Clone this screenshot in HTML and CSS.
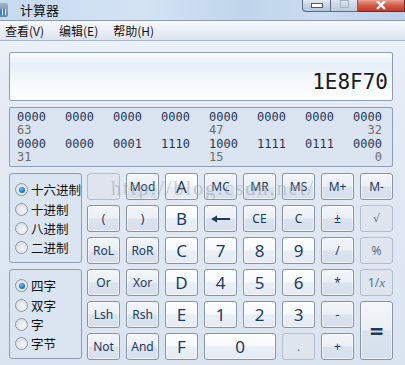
FILE: index.html
```html
<!DOCTYPE html>
<html lang="zh-CN">
<head>
    <meta charset="UTF-8">
    <meta name="viewport" content="width=device-width, initial-scale=1.0">
    <title>计算器</title>
    <link rel="stylesheet" href="styles.css">
</head>
<body>
    <div class="window">
        <!-- Title bar -->
        <div class="titlebar">
            <span class="app-icon"><span></span></span>
            <span class="title">计算器</span>
            <div class="win-buttons">
                <span class="wb wb-min"><i></i></span>
                <span class="wb wb-max"><i></i></span>
                <span class="wb wb-close">
                    <svg width="12" height="9" viewBox="0 0 12 9"><path d="M2 0 L10 8 M10 0 L2 8" stroke="#fff" stroke-width="2.4"/></svg>
                </span>
            </div>
        </div>

        <!-- Menu -->
        <div class="menubar">
            <span class="menu-item">查看(V)</span>
            <span class="menu-item">编辑(E)</span>
            <span class="menu-item">帮助(H)</span>
        </div>

        <div class="content">
            <div class="display">1E8F70</div>

            <div class="bits">
                <span>0000</span><span>0000</span><span>0000</span><span>0000</span>
                <span>0000</span><span>0000</span><span>0000</span><span>0000</span>
                <span class="pos c1">63</span><span class="pos c5">47</span><span class="pos c8">32</span>
                <span>0000</span><span>0000</span><span>0001</span><span>1110</span>
                <span>1000</span><span>1111</span><span>0111</span><span>0000</span>
                <span class="pos c1">31</span><span class="pos c5">15</span><span class="pos c8">0</span>
            </div>

            <div class="keypad">
                <div class="modes">
                    <div class="group">
                        <div class="radio-row"><span class="radio checked"></span>十六进制</div>
                        <div class="radio-row"><span class="radio"></span>十进制</div>
                        <div class="radio-row"><span class="radio"></span>八进制</div>
                        <div class="radio-row"><span class="radio"></span>二进制</div>
                    </div>
                    <div class="group">
                        <div class="radio-row"><span class="radio checked"></span>四字</div>
                        <div class="radio-row"><span class="radio"></span>双字</div>
                        <div class="radio-row"><span class="radio"></span>字</div>
                        <div class="radio-row"><span class="radio"></span>字节</div>
                    </div>
                </div>

                <div class="keys">
                    <!-- row 1 -->
                    <span class="key disabled"></span>
                    <span class="key">Mod</span>
                    <span class="key big light">A</span>
                    <span class="key">MC</span>
                    <span class="key">MR</span>
                    <span class="key">MS</span>
                    <span class="key">M+</span>
                    <span class="key">M-</span>
                    <!-- row 2 -->
                    <span class="key">(</span>
                    <span class="key">)</span>
                    <span class="key big light">B</span>
                    <span class="key">
                        <svg width="19" height="8" viewBox="0 0 19 8"><path d="M19 4 H3" stroke="#1e3a5f" stroke-width="2"/><path d="M0 4 L6 0.5 V7.5 Z" fill="#1e3a5f"/></svg>
                    </span>
                    <span class="key">CE</span>
                    <span class="key">C</span>
                    <span class="key">±</span>
                    <span class="key disabled sym">√</span>
                    <!-- row 3 -->
                    <span class="key">RoL</span>
                    <span class="key">RoR</span>
                    <span class="key big light">C</span>
                    <span class="key big light">7</span>
                    <span class="key big light">8</span>
                    <span class="key big light">9</span>
                    <span class="key">/</span>
                    <span class="key disabled">%</span>
                    <!-- row 4 -->
                    <span class="key">Or</span>
                    <span class="key">Xor</span>
                    <span class="key big light">D</span>
                    <span class="key big light">4</span>
                    <span class="key big light">5</span>
                    <span class="key big light">6</span>
                    <span class="key">*</span>
                    <span class="key disabled">1/<em>x</em></span>
                    <!-- row 5 -->
                    <span class="key">Lsh</span>
                    <span class="key">Rsh</span>
                    <span class="key big light">E</span>
                    <span class="key big light">1</span>
                    <span class="key big light">2</span>
                    <span class="key big light">3</span>
                    <span class="key">-</span>
                    <span class="key equals">=</span>
                    <!-- row 6 -->
                    <span class="key">Not</span>
                    <span class="key">And</span>
                    <span class="key big light">F</span>
                    <span class="key big light zero">0</span>
                    <span class="key disabled">.</span>
                    <span class="key">+</span>
                </div>

                <div class="watermark">http://blog.csdn.net/</div>
            </div>
        </div>
    </div>
</body>
</html>
```

FILE: styles.css
```css
body {
    margin: 0;
    font-family: "Noto Sans", "Noto Sans CJK SC", sans-serif;
    background: #dde7f2;
    overflow: hidden;
}
.window {
    width: 405px;
    height: 365px;
    background: linear-gradient(#eef3fa, #e4ebf5 30%, #dae4f0);
}

/* title bar */
.titlebar {
    height: 20px;
    display: flex;
    align-items: flex-start;
    background: linear-gradient(90deg, #c6daf0, #d3e3f4 35%, #c0d5ec 60%, #cadcf0 80%, #bcd1ea);
    border-bottom: 1px solid #8b9bb0;
}
.app-icon {
    width: 8px;
    height: 14px;
    margin-top: 3px;
    background: linear-gradient(#9fb3c9, #6f87a3);
    border-radius: 0 2px 2px 0;
    display: flex;
    align-items: flex-end;
}
.app-icon span {
    width: 6px;
    height: 6px;
    margin-bottom: 2px;
    background: repeating-linear-gradient(90deg, #3a83d4 0 2px, #e8f1fb 2px 3px);
}
.title {
    margin-left: 12px;
    margin-top: 1px;
    font-family: "Noto Sans CJK SC", sans-serif;
    font-size: 13px;
    line-height: 18px;
    color: #111;
}
.win-buttons {
    margin-left: auto;
    display: flex;
}
.wb {
    height: 11px;
    border: 1px solid #5d6c80;
    border-top: none;
    display: flex;
    align-items: center;
    justify-content: center;
}
.wb-min {
    width: 27px;
    border-radius: 0 0 0 4px;
    background: linear-gradient(#e4ecf6, #c4d3e5 50%, #b3c6dc);
}
.wb-min i {
    width: 10px;
    height: 3px;
    background: #fff;
    border: 1px solid #4b5a6e;
}
.wb-max {
    width: 26px;
    border-left: none;
    background: linear-gradient(#dfe7f1, #cad6e5 50%, #bccbdd);
}
.wb-max i {
    width: 7px;
    height: 6px;
    border: 1px solid #a6b3c3;
    margin-top: -3px;
}
.wb-close {
    width: 46px;
    border-left: none;
    border-color: #7a2a22;
    background: linear-gradient(#e8a090, #d25a46 50%, #c0392b);
}

/* menu */
.menubar {
    height: 19px;
    display: flex;
    align-items: center;
    padding-left: 5px;
    gap: 15px;
    background: linear-gradient(#f6f8fc, #eaeff7 50%, #dde4ef);
    border-bottom: 1px solid #a9b6c8;
}
.menu-item {
    font-family: "Noto Sans CJK SC", sans-serif;
    font-size: 12px;
    color: #111;
    line-height: 19px;
}

.content {
    padding: 11px 12px 0 9px;
}

/* display */
.display {
    box-sizing: border-box;
    height: 49px;
    border: 1px solid #8e9db4;
    border-radius: 2px;
    background: linear-gradient(#fafcfe, #e6eef8 25%, #f4f8fc 55%, #fff);
    display: flex;
    align-items: flex-end;
    justify-content: flex-end;
    padding: 0 4px 6px 0;
    font-family: "DejaVu Sans Mono", monospace;
    font-size: 21px;
    line-height: 24px;
    color: #1a1a1a;
}

/* binary view */
.bits {
    margin-top: 6px;
    height: 60px;
    box-sizing: border-box;
    border: 1px solid #8e9db4;
    border-radius: 2px;
    background: #dbe5f1;
    padding: 3px 0 0 7px;
    display: grid;
    grid-template-columns: repeat(8, 29px);
    column-gap: 19px;
    grid-auto-rows: 13.3px;
    font-family: "DejaVu Sans Mono", monospace;
    font-size: 12px;
    line-height: 13px;
    color: #253655;
}
.bits .pos {
    color: #6c6c6c;
}
.bits .c1 { grid-column: 1; }
.bits .c5 { grid-column: 5; }
.bits .c8 { grid-column: 8; text-align: right; }

/* keypad */
.keypad {
    position: relative;
    margin-top: 6px;
    display: flex;
    gap: 5px;
}
.modes {
    width: 73px;
    display: flex;
    flex-direction: column;
    gap: 6px;
}
.group {
    height: 90px;
    box-sizing: border-box;
    border: 1px solid #8e9db4;
    border-radius: 3px;
    background: #dbe5f1;
    padding: 6px 0 0 5px;
}
.radio-row {
    height: 19.4px;
    display: flex;
    align-items: center;
    gap: 3px;
    white-space: nowrap;
    font-family: "Noto Sans CJK SC", sans-serif;
    font-size: 12.5px;
    color: #111;
}
.radio {
    flex: none;
    width: 11px;
    height: 11px;
    border: 1px solid #8d97a6;
    border-radius: 50%;
    background: radial-gradient(circle at 60% 65%, #f4f6f9, #d3d9e1);
    display: flex;
    align-items: center;
    justify-content: center;
}
.radio.checked::after {
    content: "";
    width: 6px;
    height: 6px;
    border-radius: 50%;
    background: radial-gradient(circle at 40% 35%, #6fc2f4, #1c6fc0 60%, #0d4a8c);
}

.keys {
    display: grid;
    grid-template-columns: repeat(8, 33px);
    grid-auto-rows: 27px;
    gap: 5px 6px;
}
.key {
    box-sizing: border-box;
    border: 1px solid #8794a7;
    border-radius: 3px;
    background: linear-gradient(#f3f6fa, #eaf0f7 48%, #dae3ee 52%, #d6e0ec);
    box-shadow: inset 0 0 0 1px rgba(255, 255, 255, 0.6);
    display: flex;
    align-items: center;
    justify-content: center;
    font-size: 12px;
    color: #1e3a5f;
}
.key.big {
    font-size: 17px;
}
.key.light {
    background: linear-gradient(#fdfeff, #f6f9fc 48%, #e9eff7 52%, #e5ecf5);
}
.key.disabled {
    border-color: #b2becd;
    background: #dfe6ef;
    box-shadow: none;
    color: #5c6f88;
}
.key.sym {
    font-family: "DejaVu Sans", sans-serif;
    font-size: 11px;
}
.key em {
    font-family: "Liberation Serif", serif;
    font-size: 13px;
}
.key.zero {
    grid-column: span 2;
}
.key.equals {
    grid-row: span 2;
    font-size: 24px;
    font-weight: bold;
}

.watermark {
    position: absolute;
    left: 102px;
    top: 4px;
    font-family: "Liberation Serif", serif;
    font-size: 20px;
    letter-spacing: 2.1px;
    color: rgba(150, 160, 172, 0.5);
    pointer-events: none;
}
```
